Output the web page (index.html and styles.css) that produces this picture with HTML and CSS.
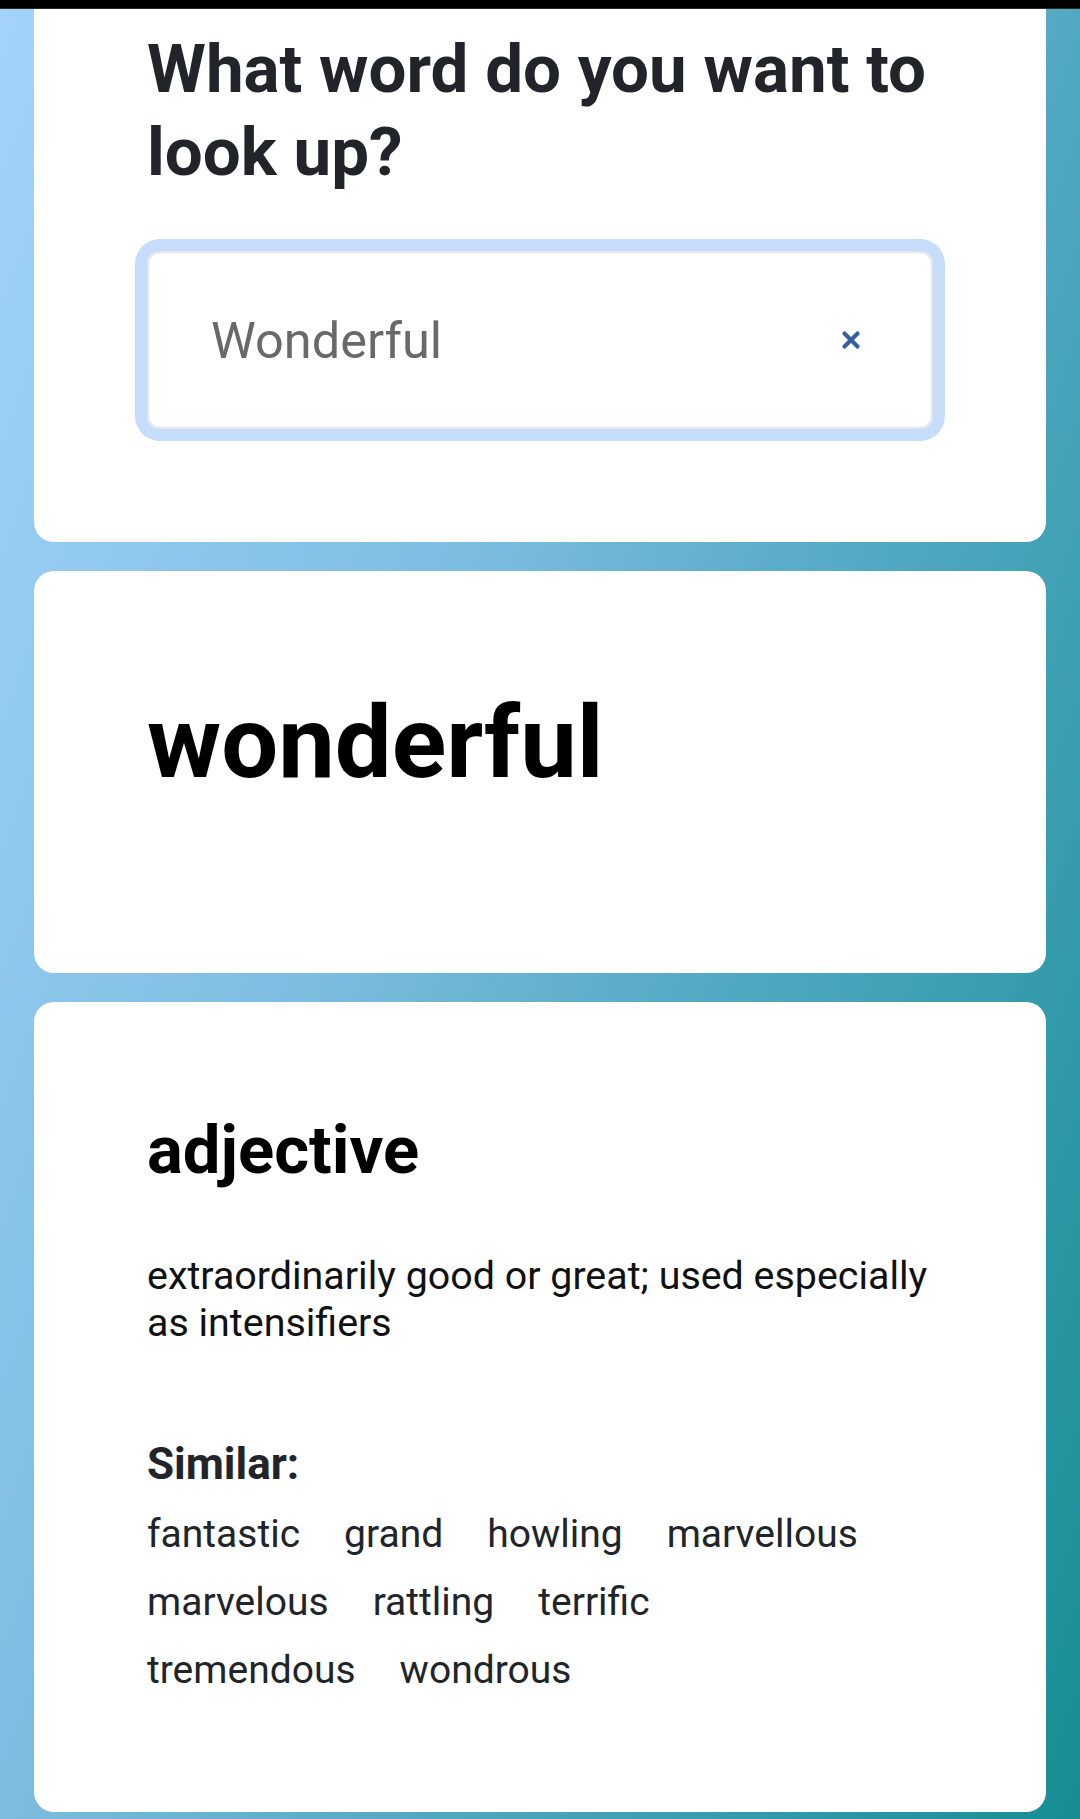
FILE: index.html
```html
<!DOCTYPE html>
<html lang="en">
<head>
<meta charset="utf-8">
<title>Dictionary</title>
<link rel="stylesheet" href="styles.css">
</head>
<body>
<div class="page">
  <div class="statusbar"></div>
  <main class="stack">
    <section class="card card-search">
      <h1 class="prompt">What word do you want to look up?</h1>
      <div class="field">
        <span class="field-text">Wonderful</span>
        <button class="clear" type="button" aria-label="Clear">
          <svg width="20" height="20" viewBox="0 0 20 20"><path d="M3.5 3.5 L16.5 16.5 M16.5 3.5 L3.5 16.5" stroke="#37609f" stroke-width="4.2" stroke-linecap="round" fill="none"/></svg>
        </button>
      </div>
    </section>
    <section class="card card-word">
      <h2 class="word">wonderful</h2>
    </section>
    <section class="card card-meaning">
      <h3 class="pos">adjective</h3>
      <p class="definition">extraordinarily good or great; used especially as intensifiers</p>
      <h4 class="similar-title">Similar:</h4>
      <ul class="similar">
        <li>fantastic</li>
        <li>grand</li>
        <li>howling</li>
        <li>marvellous</li>
        <li>marvelous</li>
        <li>rattling</li>
        <li>terrific</li>
        <li>tremendous</li>
        <li>wondrous</li>
      </ul>
    </section>
  </main>
</div>
</body>
</html>
```
FILE: styles.css
```css
html, body {
  margin: 0;
  padding: 0;
}
body {
  font-family: Roboto, "Noto Sans", "Liberation Sans", sans-serif;
}
.page {
  height: 1819px;
  overflow: hidden;
  background: linear-gradient(110deg, #a3d3fb 0%, #7dbde0 38%, #52a8c2 62%, #168e93 100%);
}
.statusbar {
  height: 9px;
  background: #000;
  border-bottom: 1px solid #2a2a2a;
  box-sizing: border-box;
}
.stack {
  display: flex;
  flex-direction: column;
  gap: 29px;
  padding: 0 34px;
}
.card {
  background: #fff;
  border-radius: 20px;
  padding: 0 113px;
}
.card-search {
  border-radius: 0 0 20px 20px;
  padding-top: 19px;
  padding-bottom: 113px;
}
.prompt {
  margin: 0;
  font-size: 67.3px;
  line-height: 83px;
  font-weight: 700;
  color: #212529;
}
.field {
  margin-top: 57px;
  height: 178px;
  box-sizing: border-box;
  border: 2px solid #e2e6ea;
  border-radius: 13px;
  box-shadow: 0 0 0 12px #c5dcfa;
  display: flex;
  align-items: center;
  padding: 0 70px 0 62px;
}
.field-text {
  flex: 1;
  font-size: 50.5px;
  font-weight: 400;
  color: #696969;
}
.clear {
  border: 0;
  background: none;
  padding: 0;
  width: 20px;
  height: 20px;
  display: flex;
}
.card-word {
  padding-top: 111px;
  padding-bottom: 169px;
}
.word {
  margin: 0;
  font-size: 101px;
  font-weight: 700;
  line-height: 122px;
  color: #000;
}
.card-meaning {
  padding-top: 109px;
  padding-bottom: 119px;
}
.pos {
  margin: 0;
  font-size: 67px;
  line-height: 78px;
  font-weight: 700;
  color: #000;
}
.definition {
  margin: 63px 0 0;
  font-size: 39.4px;
  line-height: 47px;
  color: #111;
}
.similar-title {
  margin: 92px 0 0;
  font-size: 44px;
  line-height: 52px;
  font-weight: 700;
  color: #212529;
}
.similar {
  list-style: none;
  margin: 21px 0 0;
  padding: 0;
  display: flex;
  flex-wrap: wrap;
  row-gap: 22px;
  font-size: 39px;
  line-height: 46px;
  color: #212529;
}
.similar li {
  margin-right: 44px;
}
```
